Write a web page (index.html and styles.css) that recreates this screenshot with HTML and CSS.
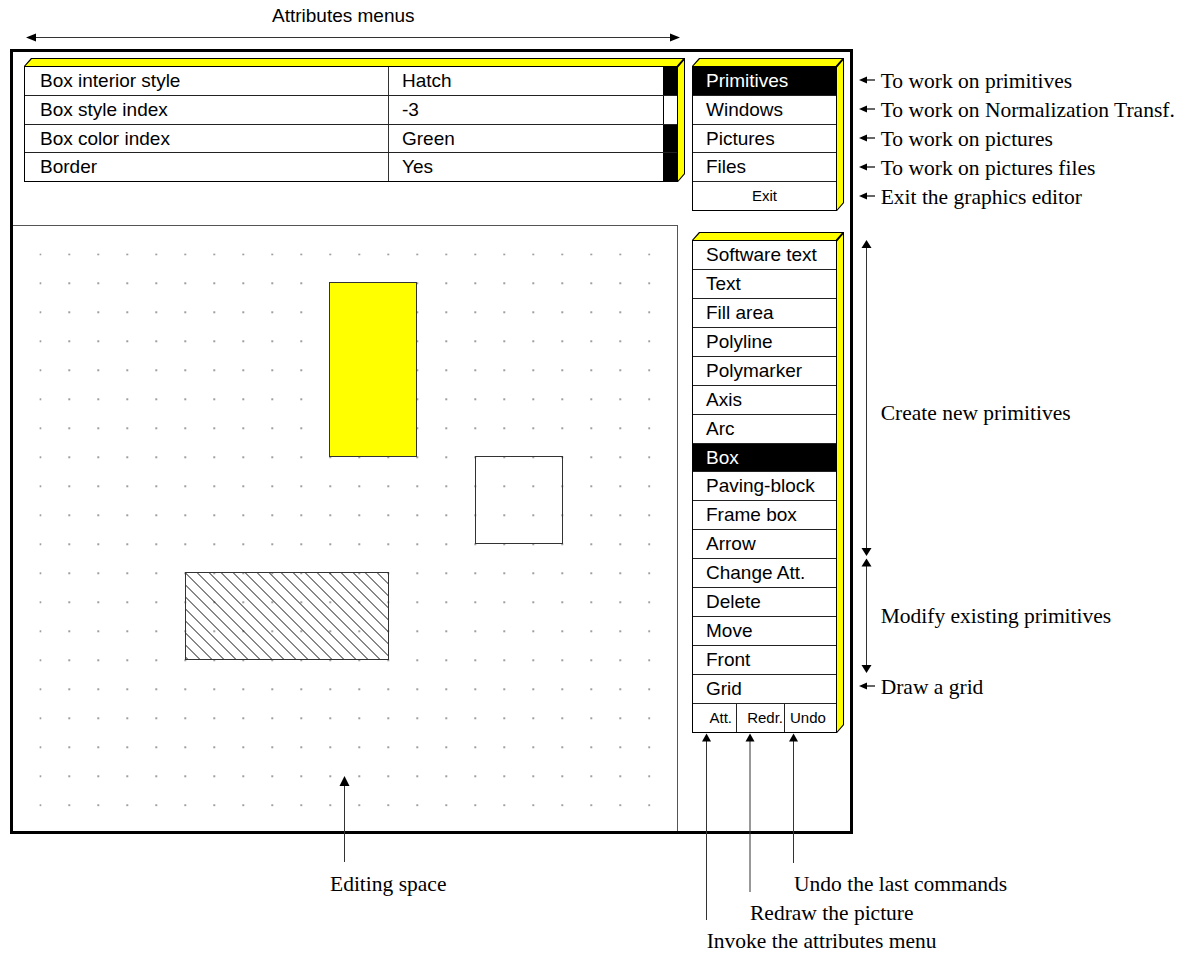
FILE: index.html
```html
<!DOCTYPE html>
<html>
<head>
<meta charset="utf-8">
<title>Graphics editor</title>
<link rel="stylesheet" href="styles.css">
</head>
<body>
<div class="page">
  <div class="top-caption">Attributes menus</div>
  <div class="main">
    <div class="frame">
      <div class="left-col">
        <div class="attr-area">
          <div class="bevel">
            <div class="attr-table">
              <div class="attr-row"><span class="a-label">Box interior style</span><span class="a-value">Hatch</span><span class="a-scroll on"></span></div>
              <div class="attr-row"><span class="a-label">Box style index</span><span class="a-value">-3</span><span class="a-scroll"></span></div>
              <div class="attr-row"><span class="a-label">Box color index</span><span class="a-value">Green</span><span class="a-scroll on"></span></div>
              <div class="attr-row"><span class="a-label">Border</span><span class="a-value">Yes</span><span class="a-scroll on"></span></div>
            </div>
          </div>
        </div>
        <div class="edit-space">
          <svg class="canvas" width="664" height="605" viewBox="0 0 664 605">
            <defs>
              <pattern id="dots" x="26.5" y="27.5" width="29" height="29" patternUnits="userSpaceOnUse">
                <rect x="0" y="0" width="1.4" height="1.4" fill="#3a3a3a"/>
              </pattern>
              <pattern id="hatch" x="172" y="346.5" width="12" height="12" patternUnits="userSpaceOnUse">
                <path d="M-1,-1 L13,13 M-1,11 L1,13 M11,-1 L13,1" stroke="#111" stroke-width="1" fill="none"/>
              </pattern>
            </defs>
            <rect x="26.5" y="27.5" width="611" height="553" fill="url(#dots)"/>
            <rect x="316.5" y="56.5" width="87" height="174" fill="#ffff00" stroke="#333" stroke-width="1"/>
            <rect x="462.5" y="230.5" width="87" height="87" fill="none" stroke="#333" stroke-width="1"/>
            <rect x="172.5" y="346.5" width="203" height="87" fill="url(#hatch)" stroke="#333" stroke-width="1"/>
          </svg>
        </div>
      </div>
      <div class="right-col">
        <div class="bevel">
          <div class="menu menu-top">
            <div class="item sel">Primitives</div>
            <div class="item">Windows</div>
            <div class="item">Pictures</div>
            <div class="item">Files</div>
            <div class="item small">Exit</div>
          </div>
        </div>
        <div class="bevel bevel-gap">
          <div class="menu menu-prims">
            <div class="item">Software text</div>
            <div class="item">Text</div>
            <div class="item">Fill area</div>
            <div class="item">Polyline</div>
            <div class="item">Polymarker</div>
            <div class="item">Axis</div>
            <div class="item">Arc</div>
            <div class="item sel">Box</div>
            <div class="item">Paving-block</div>
            <div class="item">Frame box</div>
            <div class="item">Arrow</div>
            <div class="item">Change Att.</div>
            <div class="item">Delete</div>
            <div class="item">Move</div>
            <div class="item">Front</div>
            <div class="item">Grid</div>
            <div class="item cmd-row">
              <span class="cmd cmd-att">Att.</span>
              <span class="cmd cmd-redr">Redr.</span>
              <span class="cmd cmd-undo">Undo</span>
            </div>
          </div>
        </div>
      </div>
    </div>
    <div class="notes">
      <div class="note"><svg class="larrow" width="16" height="10" viewBox="0 0 16 10"><polygon points="0,5 8,1.5 8,8.5" fill="#000"/><line x1="7" y1="5" x2="16" y2="5" stroke="#000" stroke-width="1.2"/></svg>To work on primitives</div>
      <div class="note"><svg class="larrow" width="16" height="10" viewBox="0 0 16 10"><polygon points="0,5 8,1.5 8,8.5" fill="#000"/><line x1="7" y1="5" x2="16" y2="5" stroke="#000" stroke-width="1.2"/></svg>To work on Normalization Transf.</div>
      <div class="note"><svg class="larrow" width="16" height="10" viewBox="0 0 16 10"><polygon points="0,5 8,1.5 8,8.5" fill="#000"/><line x1="7" y1="5" x2="16" y2="5" stroke="#000" stroke-width="1.2"/></svg>To work on pictures</div>
      <div class="note"><svg class="larrow" width="16" height="10" viewBox="0 0 16 10"><polygon points="0,5 8,1.5 8,8.5" fill="#000"/><line x1="7" y1="5" x2="16" y2="5" stroke="#000" stroke-width="1.2"/></svg>To work on pictures files</div>
      <div class="note"><svg class="larrow" width="16" height="10" viewBox="0 0 16 10"><polygon points="0,5 8,1.5 8,8.5" fill="#000"/><line x1="7" y1="5" x2="16" y2="5" stroke="#000" stroke-width="1.2"/></svg>Exit the graphics editor</div>
      <div class="note indent note-create">Create new primitives</div>
      <div class="note indent note-modify">Modify existing primitives</div>
      <div class="note note-grid"><svg class="larrow" width="16" height="10" viewBox="0 0 16 10"><polygon points="0,5 8,1.5 8,8.5" fill="#000"/><line x1="7" y1="5" x2="16" y2="5" stroke="#000" stroke-width="1.2"/></svg>Draw a grid</div>
    </div>
  </div>
  <div class="bottom-notes">
    <div class="bnote bnote-1"><span class="bn-edit">Editing space</span><span>Undo the last commands</span></div>
    <div class="bnote bnote-2">Redraw the picture</div>
    <div class="bnote bnote-3">Invoke the attributes menu</div>
  </div>
  <svg class="leaders" width="1185" height="955" viewBox="0 0 1185 955">
    <g stroke="#333" stroke-width="1" fill="none">
      <line x1="35" y1="37.5" x2="671" y2="37.5"/>
      <line x1="344.5" y1="785" x2="344.5" y2="862"/>
      <line x1="866.5" y1="247" x2="866.5" y2="549"/>
      <line x1="866.5" y1="566" x2="866.5" y2="666"/>
      <line x1="706.5" y1="741" x2="706.5" y2="920"/>
      <line x1="750" y1="741" x2="750" y2="892"/>
      <line x1="793.5" y1="741" x2="793.5" y2="863"/>
    </g>
    <g fill="#000">
      <polygon points="26,37.5 36,33.5 36,41.5"/>
      <polygon points="680,37.5 670,33.5 670,41.5"/>
      <polygon points="344.5,776 339.5,786 349.5,786"/>
      <polygon points="866.5,240 861.5,248 871.5,248"/>
      <polygon points="866.5,556 861.5,548 871.5,548"/>
      <polygon points="866.5,558.5 861.5,566.5 871.5,566.5"/>
      <polygon points="866.5,673 861.5,665 871.5,665"/>
      <polygon points="706.5,733.5 702,741.5 711,741.5"/>
      <polygon points="750,733.5 745.5,741.5 754.5,741.5"/>
      <polygon points="793.5,733.5 789,741.5 798,741.5"/>
    </g>
  </svg>
</div>
</body>
</html>
```

FILE: styles.css
```css
* { box-sizing: border-box; }

html, body {
  margin: 0;
  padding: 0;
  background: #fff;
}

.page {
  position: relative;
  width: 1185px;
  height: 955px;
  overflow: hidden;
  font-family: "Liberation Sans", Arial, sans-serif;
  color: #000;
}

.top-caption {
  height: 49px;
  padding: 5px 0 0 272px;
  font-size: 19px;
  line-height: 22px;
}

.main {
  display: flex;
  align-items: flex-start;
}

.frame {
  margin-left: 10px;
  width: 843px;
  height: 785px;
  border: 3px solid #000;
  display: flex;
  flex-shrink: 0;
}

.left-col {
  width: 665px;
  display: flex;
  flex-direction: column;
  flex-shrink: 0;
}

.attr-area {
  height: 173px;
  padding: 6px 0 0 11px;
}

.edit-space {
  flex: 1;
  border-top: 1px solid #555;
  border-right: 1px solid #555;
}

.canvas { display: block; }

/* 3D yellow bevel around menus */
.bevel {
  position: relative;
  padding: 8px 7px 0 0;
  width: max-content;
}

.bevel::before,
.bevel::after {
  content: "";
  position: absolute;
  inset: 0;
}

.bevel::before {
  background: #000;
  clip-path: polygon(0 8px, 7px 0, 100% 0, 100% calc(100% - 8px), calc(100% - 7px) 100%, 0 100%);
}

.bevel::after {
  background: #ffff00;
  clip-path: polygon(1.4px 8px, 7.9px 1px, calc(100% - 2.2px) 1px, calc(100% - 8.3px) 8px,
    calc(100% - 8.3px) 10px, calc(100% - 7px) 9.4px, calc(100% - 1px) 2.6px,
    calc(100% - 1px) calc(100% - 8.4px), calc(100% - 7px) calc(100% - 1.5px), 1.4px calc(100% - 1.5px));
}

.bevel > * {
  position: relative;
  z-index: 1;
}

/* attributes table */
.attr-table {
  width: 654px;
  border: 1px solid #000;
  border-bottom: 0;
  background: #fff;
  font-size: 19px;
}

.attr-row {
  display: grid;
  grid-template-columns: 363px 275px 14px;
  height: 28.75px;
  border-bottom: 1px solid #222;
  line-height: 27.75px;
}

.attr-row:last-child { border-bottom-color: #000; }

.a-label {
  padding-left: 15px;
  white-space: nowrap;
}

.a-value {
  border-left: 1px solid #333;
  padding-left: 13px;
  white-space: nowrap;
}

.a-scroll {
  border-left: 1px solid #000;
  background: #fff;
}

.a-scroll.on { background: #000; }

/* right menus */
.right-col {
  padding: 6px 0 0 14px;
  display: flex;
  flex-direction: column;
}

.bevel-gap { margin-top: 21px; }

.menu {
  width: 145px;
  border: 1px solid #000;
  border-bottom: 0;
  background: #fff;
}

.item {
  height: 28.8px;
  border-bottom: 1px solid #222;
  padding-left: 13px;
  font-size: 19px;
  line-height: 27.8px;
  white-space: nowrap;
}

.menu-prims .item {
  height: 28.95px;
  line-height: 27.95px;
}

.item:last-child { border-bottom-color: #000; }

.item.sel {
  background: #000;
  color: #fff;
}

.item.small {
  padding-left: 0;
  text-align: center;
  font-size: 15px;
}

.cmd-row {
  display: flex;
  padding-left: 0;
  font-size: 15px;
}

.cmd {
  display: block;
  height: 100%;
}

.cmd-att {
  width: 43px;
  text-align: right;
  padding-right: 4px;
}

.cmd-redr {
  width: 48px;
  border-left: 1px solid #222;
  text-align: right;
  padding-right: 1px;
}

.cmd-undo {
  width: 52px;
  border-left: 1px solid #222;
  padding-left: 5px;
}

/* annotations */
.notes {
  padding: 17.5px 0 0 6px;
  font-family: "Liberation Serif", "Times New Roman", serif;
  font-size: 21.5px;
  line-height: 29px;
}

.note {
  height: 29px;
  white-space: nowrap;
}

.larrow {
  vertical-align: 3px;
  margin-right: 5.7px;
}

.indent { padding-left: 21.7px; }

.note-create { margin-top: 187.5px; }
.note-modify { margin-top: 173.5px; }
.note-grid { margin-top: 42.7px; }

.bottom-notes {
  padding-top: 35.9px;
  font-family: "Liberation Serif", "Times New Roman", serif;
  font-size: 21.5px;
  line-height: 28.7px;
}

.bnote {
  height: 28.7px;
  white-space: nowrap;
}

.bnote-1 {
  display: flex;
  padding-left: 330px;
}

.bn-edit { width: 464px; }

.bnote-2 { padding-left: 750px; }
.bnote-3 { padding-left: 706.7px; }

.leaders {
  position: absolute;
  left: 0;
  top: 0;
  pointer-events: none;
}
```
